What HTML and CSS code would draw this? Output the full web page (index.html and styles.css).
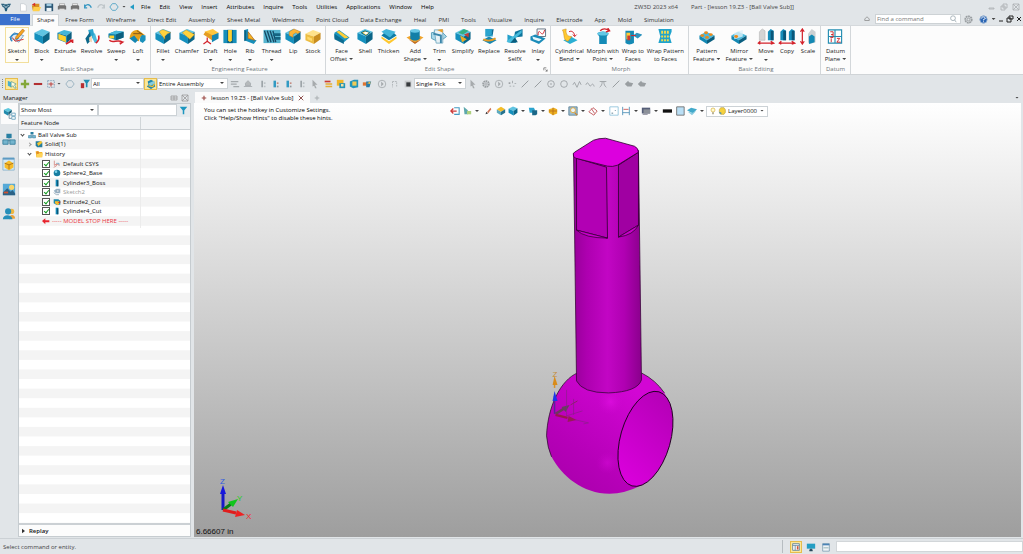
FILE: index.html
```html
<!DOCTYPE html>
<html lang="en">
<head>
<meta charset="utf-8">
<title>ZW3D 2023 x64</title>
<link rel="stylesheet" href="styles.css">
</head>
<body>
<svg class="defs" aria-hidden="true">
<defs>
<g id="cube"><path d="M1 5 9 1l8 3-7 5z" fill="#5fc4e2"/><path d="M1 5l9 4v8l-9-5z" fill="#1590bd"/><path d="M10 9l7-5v8l-7 5z" fill="#0b6688"/></g>
<g id="slab"><path d="M1 8 8 4l9 4-8 5z" fill="#4dbbdd"/><path d="M1 8l8 5v4l-8-5z" fill="#1488b3"/><path d="M9 13l8-5v4l-8 5z" fill="#0a5f80"/></g>
</defs>
<symbol id="i-sketch" viewBox="0 0 18 18"><path d="M1 10l5-5 10 3-5 7z" fill="#dcebf7" stroke="#7ba3c6"/><path d="M4 14c-4-3 0-8 4-8s3 6 0 6" fill="none" stroke="#2d87c6" stroke-width="1.5"/><path d="M15 1l2 2-7 8-3 1 1-3z" fill="#f4a521" stroke="#a85a14" stroke-width=".6"/><path d="M4 10l3 4 9-2" stroke="#d7342c" fill="none"/></symbol>
<symbol id="i-block" viewBox="0 0 18 18"><use href="#cube"/></symbol>
<symbol id="i-extrude" viewBox="0 0 18 18"><path d="M1 5l7-3 8 2-5 4z" fill="#43b5d8"/><path d="M1 5l10 3v8L1 12z" fill="#127fab"/><path d="M2 6l8 3v6l-8-3z" fill="#ffd02e"/><path d="M11 8l5-4v7l-5 5z" fill="#0b5f80"/><path d="M10 17l7-4M14 13h3v3" fill="none" stroke="#d3222b" stroke-width="1.8"/></symbol>
<symbol id="i-revolve" viewBox="0 0 18 18"><path d="M5 2l5-1 2 9-5 1z" fill="#2aa3cd"/><path d="M2 11l5-7 1 9-4 4z" fill="#0b678a"/><path d="M9 10l3-5 3 10-3 1z" fill="#4abadc"/><path d="M6 10l3-2v7l-3-1z" fill="#f3d8ba"/><path d="M16 8c1 4 0 6-3 8" fill="none" stroke="#d3222b" stroke-width="1.7"/></symbol>
<symbol id="i-sweep" viewBox="0 0 18 18"><path d="M1 6l8-3 8 1v6l-8 3-8-3z" fill="#1180aa"/><path d="M1 6l8-3 8 1-8 3z" fill="#49b9dc"/><path d="M2 8h5v3H2z" fill="#ffd02e"/><path d="M9 7l8-3v6l-8 3z" fill="#0b5e7e"/><path d="M2 13c4 4 8-2 14 2m-4-1 4 1-3 2" fill="none" stroke="#d3222b" stroke-width="1.6"/></symbol>
<symbol id="i-loft" viewBox="0 0 18 18"><path d="M0 11C1 3 5 2 9 2l8 6c-2-1-6 0-7 6z" fill="#e5a11c"/><path d="M4 6l9 0M8 3l6 4" stroke="#80551a"/><path d="M0 11l5-3 4 5-3 3z" fill="#1586b2"/><path d="M11 14c0-7 3-7 6-6v5l-3 3z" fill="#1b91bc"/></symbol>
<symbol id="i-fillet" viewBox="0 0 18 18"><use href="#cube"/><path d="M5 4q3-3 5-2l7 3q-4 0-6 4v3z" fill="#ffd23d" stroke="#b98211" stroke-width=".4"/></symbol>
<symbol id="i-chamfer" viewBox="0 0 18 18"><use href="#cube"/><path d="M4 5l4-3 9 5-5 5z" fill="#ffd23d" stroke="#b98211" stroke-width=".4"/></symbol>
<symbol id="i-draft" viewBox="0 0 18 18"><path d="M2 4l9-3 6 4-7 4z" fill="#ffc63d"/><path d="M1 7l2-3 8 4-1 5z" fill="#e49c21"/><path d="M10 8l7-3v6l-7 4z" fill="#1687b2"/><path d="M5 10v5m-4 2 4-3 4 3" fill="none" stroke="#d3222b" stroke-width="1.3"/></symbol>
<symbol id="i-hole" viewBox="0 0 18 18"><path d="M2 2h14v14H2z" fill="#168fba"/><path d="M6 2h6v14H6z" fill="#0b6688"/><path d="M7 2h4v11l-2 2-2-2z" fill="#ffd12f"/></symbol>
<symbol id="i-rib" viewBox="0 0 18 18"><path d="M3 2l4-1v10l9 2-3 4-10-4z" fill="#178fba"/><path d="M3 2l2 1v10l-2 1z" fill="#0b6182"/><path d="M7 4l7 9-7-2z" fill="#f9b522" stroke="#9d5913" stroke-width=".7"/></symbol>
<symbol id="i-thread" viewBox="0 0 18 18"><path d="M0 2h18v14H0z" fill="#55b4cf"/><path d="M1 3l4 12M4 3l4 12M7 3l4 12M10 3l3 12" stroke="#174a65" stroke-width="1.4"/><path d="M10 7h8M12 11h6" stroke="#156482" stroke-width="3"/></symbol>
<symbol id="i-lip" viewBox="0 0 18 18"><use href="#cube"/><path d="M5 4l5-3 7 3-3 2-2-1-3 2v3l-4-2z" fill="#fdb537" stroke="#a86313" stroke-width=".4"/></symbol>
<symbol id="i-stock" viewBox="0 0 18 18"><path d="M1 6l8-4 8 3-7 4z" fill="#ffe28b"/><path d="M1 6l9 3v8l-9-4z" fill="#edbd42"/><path d="M10 9l7-4v7l-7 5z" fill="#c98e20"/><path d="M3 9l5 2v3l-5-2z" fill="#ffd96b"/></symbol>
<symbol id="i-face" viewBox="0 0 18 18"><path d="M1 5l5-3 11 8-6 5-10-5z" fill="#1a95c0"/><path d="M1 6l10 7v4L1 12z" fill="#0d6d92"/><path d="M3 4l3-1 10 7-4 1z" fill="#ffce38"/></symbol>
<symbol id="i-shell" viewBox="0 0 18 18"><use href="#cube"/><path d="M5 5l4-2 5 2-4 3z" fill="#ffce38" stroke="#0b6688"/><path d="M7 5l3 2 3-2-3-1z" fill="#fff"/></symbol>
<symbol id="i-thicken" viewBox="0 0 18 18"><path d="M1 8l8 5 8-5-3-3H4z" fill="#0f7ca5"/><path d="M1 9l8 5 8-5v2l-8 6-8-6z" fill="#ffc82e"/><path d="M1 4l5-3 10 3-6 6z" fill="#42b4d8"/></symbol>
<symbol id="i-add" viewBox="0 0 18 18"><path d="M0 10l9-4 9 4-9 6z" fill="#f0a42b"/><path d="M4 3v8c2 3 8 3 10 0V3z" fill="#127fa8"/><ellipse cx="9" cy="3" rx="5" ry="2" fill="#67c7e5"/><path d="M2 12l7 3 7-3-7 5z" fill="#bd681d"/></symbol>
<symbol id="i-trim" viewBox="0 0 18 18"><path d="M1 5l10-2 6 6-8 6-8-4z" fill="#a8d8e9" stroke="#5a9eba"/><path d="M4 2h9v14H6z" fill="#e8f2f6" stroke="#78adc3"/><path d="M3 6l8 2v8" fill="none" stroke="#3b86aa" stroke-width="2"/><path d="M7 2l6-1v4" fill="#eda128"/></symbol>
<symbol id="i-simplify" viewBox="0 0 18 18"><use href="#cube"/><path d="M4 5l5 2 6-4-5-2z" fill="#35ae83"/><path d="M6 8l7 4-5 3z" fill="#ecac24"/><path d="M10 7l5-2v5z" fill="#c54136"/></symbol>
<symbol id="i-replace" viewBox="0 0 18 18"><path d="M5 1h8v8H5z" fill="#2ba4ce"/><path d="M4 10l9-3 1-6-2 1v5z" fill="#126b92"/><path d="M2 13l7-4 8 4-7 4z" fill="#1787b1"/><path d="M3 12c4 2 8 2 13-1" stroke="#e49a25" fill="none" stroke-width="2"/></symbol>
<symbol id="i-resolve" viewBox="0 0 18 18"><path d="M1 7l8 3 1 6-9-1z" fill="#24a0cb"/><path d="M9 4l8-3v8l-9 1z" fill="#0e759d"/><path d="M0 14L16 2v3L4 16z" fill="#45bbdc"/><path d="M9 10l3 5-8 1z" fill="#0a5c7d"/></symbol>
<symbol id="i-inlay" viewBox="0 0 18 18"><path d="M8 1h9v8H8z" fill="#fff" stroke="#627282"/><path d="M9 8c1-12 4 6 7-6" fill="none" stroke="#d3222b"/><path d="M1 9l5-2 11 4-7 6-9-4z" fill="#1b8cb9"/><path d="M3 9l10 3-3 2-6-2z" fill="#e8f6fa"/></symbol>
<symbol id="i-bend" viewBox="0 0 18 18"><path d="M3 13l8-4 7 4-8 4z" fill="#2aafd3"/><path d="M2 2l4-1c-1 7 3 8 6 8l-4 5C2 13 5 7 2 2z" fill="#ffc830" stroke="#c58512" stroke-width=".5"/><path d="M9 4c3-2 6 1 6 5m-2-2 2 2 2-2" fill="none" stroke="#d3222b"/></symbol>
<symbol id="i-morph" viewBox="0 0 18 18"><path d="M3 6c2-3 10-3 12 0l-2 3v8H5V9z" fill="#158bb7"/><ellipse cx="9" cy="6" rx="6" ry="2" fill="#63c7e5"/><path d="M6 3c3-3 7-2 10 0m-2-3 2 3-4 1" fill="none" stroke="#d3222b" stroke-width="1.4"/></symbol>
<symbol id="i-wrap" viewBox="0 0 18 18"><path d="M1 3h9v13c-3 2-7 2-9 0z" fill="#148ab5"/><path d="M2 5h4v7H2z" fill="#ffc936"/><path d="M3 8h3v5H3z" fill="#cf3c30"/><path d="M9 8l4-3 6 2-5 4z" fill="#2b93be"/><path d="M7 8h5" stroke="#d3222b"/></symbol>
<symbol id="i-wrapp" viewBox="0 0 18 18"><path d="M2 1h14v3l-2 5 2 7H2l2-7z" fill="#20a3cc"/><path d="M5 3h2v3H5zm3 0h2v3H8zm3 0h2v3h-2zM5 8h2v2H5zm3 0h2v2H8zm3 0h2v2h-2zM5 12h2v2H5zm3 0h2v2H8zm3 0h2v2h-2z" fill="#f4db4d"/></symbol>
<symbol id="i-pattern" viewBox="0 0 18 18"><use href="#slab"/><g fill="#ec8b1c"><ellipse cx="8" cy="5" rx="2" ry="1.5"/><ellipse cx="4" cy="8" rx="2" ry="1.5"/><ellipse cx="13" cy="7" rx="2" ry="1.5"/><ellipse cx="9" cy="10" rx="2" ry="1.5"/></g></symbol>
<symbol id="i-mirror" viewBox="0 0 18 18"><use href="#slab"/><path d="M4 5l9-3v7l-9 3z" fill="#dcf0f7" opacity=".8"/><ellipse cx="6" cy="9" rx="2" ry="1.5" fill="#ec8b1c"/></symbol>
<symbol id="i-move" viewBox="0 0 18 18"><path d="M2 4l3-3 3 2v10H2z" fill="#d4d4d4" stroke="#aaa" stroke-width=".5"/><path d="M11 4l3-3 3 2v10h-6z" fill="#168dba"/><path d="M14 3l3 0v10h-3z" fill="#09577a"/><path d="M1 16h15M3 14l-2 2 2 1M14 14l3 2-3 1" stroke="#d3222b" stroke-width="1.5" fill="none"/></symbol>
<symbol id="i-copy" viewBox="0 0 18 18"><path d="M2 4l3-3 3 2v10H2zM11 4l3-3 3 2v10h-6z" fill="#168dba"/><path d="M5 3h3v10H5zM14 3h3v10h-3z" fill="#09577a"/><path d="M1 16h15M3 14l-2 2 2 1M14 14l3 2-3 1" stroke="#d3222b" stroke-width="1.5" fill="none"/></symbol>
<symbol id="i-scale" viewBox="0 0 18 18"><path d="M3 2v14M1 4l2-3 2 3M1 14l2 3 2-3" fill="none" stroke="#d3222b" stroke-width="1.3"/><path d="M9 6l4-5 4 3v11l-6 2-2-2z" fill="#ccd0d2"/><path d="M10 9l3-2 3 2v6l-6 2z" fill="#1489b4"/></symbol>
<symbol id="i-datum" viewBox="0 0 18 18"><path d="M2 2h14v14H2zM9 2v14M2 9h14" fill="#fff" stroke="#238db1" stroke-width="1.2"/><g fill="none" stroke="#cf292c"><path d="M4 4h3v3H5h2v3H4M5 11v4M11 11h3l-3 4h4"/></g></symbol>

<symbol id="s-new" viewBox="0 0 12 12"><path d="M3 2h4l3 2v7H3z" fill="#fff" stroke="#c9ced2"/></symbol>
<symbol id="s-open" viewBox="0 0 12 12"><path d="M1 4h3l1-2h5v8H2z" fill="#d89121"/><path d="M3 6h9l-2 5H2z" fill="#ffd04a"/><path d="M1 3l4-2v4z" fill="#d62e25"/></symbol>
<symbol id="s-save" viewBox="0 0 12 12"><path d="M1 2h10v9H1z" fill="#2b5674"/><path d="M3 2h6v3H3z" fill="#9ec9df"/><path d="M3 7h6v4H3z" fill="#eef5f8"/></symbol>
<symbol id="s-print" viewBox="0 0 12 12"><path d="M3 2h6v3H3z" fill="#eee" stroke="#777" stroke-width=".5"/><path d="M1 5l2-1h7l1 1v4H1z" fill="#717171"/><path d="M3 8h6v2H3z" fill="#ddd"/></symbol>
<symbol id="s-undo" viewBox="0 0 12 12"><path d="M2 6c2-4 6-4 8 1M2 3v4h3" fill="none" stroke="#3596c1" stroke-width="1.5"/></symbol>
<symbol id="s-redo" viewBox="0 0 12 12"><path d="M10 6C8 2 4 2 2 7m8-4v4H7" fill="none" stroke="#bec5c9" stroke-width="1.5"/></symbol>
<symbol id="s-hex" viewBox="0 0 12 12"><path d="M4 2h4l3 4-3 4H4L1 6z" fill="none" stroke="#62abc9" stroke-width="1.2"/></symbol>
<symbol id="s-hexg" viewBox="0 0 12 12"><path d="M4 2h4l3 4-3 4H4L1 6z" fill="none" stroke="#9fb6c3" stroke-width="1.2"/></symbol>
<symbol id="s-left" viewBox="0 0 12 12"><path d="M9 2v8L3 6z" fill="#219bc4"/></symbol>
<symbol id="s-logo" viewBox="0 0 12 12"><path d="M0 2l4 0 2 1 2-1 4 0-2 4-2 1-1 4-2 0-1-4-2-1z" fill="#245b79"/><path d="M2 4l3 1 1 2 1-2 3-1M4 1v2m4-2v2" stroke="#d3e6ed" fill="none" stroke-width=".8"/></symbol>
<symbol id="s-pick" viewBox="0 0 12 12"><path d="M1 2l4 2v6l-4-2z" fill="#4aaecd"/><path d="M5 3l6 3-2 1 2 4-2 0-2-3-2 2z" fill="#fffbe2" stroke="#3a8b88" stroke-width=".7"/></symbol>
<symbol id="s-plus" viewBox="0 0 12 12"><path d="M6 1v10M1 6h10" stroke="#83a83a" stroke-width="2.800"/></symbol>
<symbol id="s-minus" viewBox="0 0 12 12"><path d="M1 6h10" stroke="#b22f31" stroke-width="2.500"/></symbol>
<symbol id="s-boxplus" viewBox="0 0 12 12"><path d="M2 2h8v8H2z" fill="none" stroke="#799db7" stroke-dasharray="2 1"/><path d="M6 4v5M3 6h6" stroke="#bd4642" stroke-width="1.3"/></symbol>
<symbol id="s-filter" viewBox="0 0 12 12"><path d="M1 5h4v6H1z" fill="#b72e31"/><path d="M4 1h8L9 5v5H7V5z" fill="#1e8fb3"/></symbol>
<symbol id="s-assy" viewBox="0 0 12 12"><path d="M2 3l4-2 4 2v2l1 4-5 3-5-3 2-2z" fill="#2186ad"/><path d="M3 5l7-3v4L5 8z" fill="#86ccdd"/><path d="M3 8l5 1 2-3" fill="none" stroke="#f7bf2c" stroke-width="1.5"/></symbol>
<symbol id="s-g1" viewBox="0 0 12 12"><path d="M1 3h9M1 6h7M4 9h7" stroke="#a5aaad" stroke-width="1.5"/></symbol>
<symbol id="s-g2" viewBox="0 0 12 12"><path d="M3 5l3-3 3 3v3H3zM1 9h10" fill="#b5b9bb" stroke="#a5aaad"/></symbol>
<symbol id="s-col" viewBox="0 0 12 12"><path d="M4 2h2v8H4z" fill="#9da4a8"/><path d="M7 4h2v2H7zm0 4h2v2H7z" fill="#bcc2c5"/></symbol>
<symbol id="s-colb" viewBox="0 0 12 12"><path d="M3 2h3v8H3z" fill="#319ac3"/><path d="M7 4h2v2H7z" fill="#c58b80"/><path d="M7 8h2v2H7z" fill="#8d989e"/></symbol>
<symbol id="s-cur" viewBox="0 0 12 12"><path d="M3 1l6 6-3 0 2 4-2 0-1-3-2 1z" fill="#a7abad"/></symbol>
<symbol id="s-list" viewBox="0 0 12 12"><path d="M2 2h7v2H2z" fill="#cc3930"/><path d="M3 5h8v2H3zm0 3h8v2H3z" fill="#e6ae34"/></symbol>
<symbol id="s-multi" viewBox="0 0 12 12"><path d="M1 1h8v7H1z" fill="#f0b628"/><path d="M4 5h7v6H4z" fill="#2295bb"/><path d="M6 6h3v3H6z" fill="#f7e2a1"/></symbol>
<symbol id="s-multi2" viewBox="0 0 12 12"><path d="M1 3l5-2h5v9l-6 1-4-2z" fill="#2295bb"/><path d="M4 3h5v5H4z" fill="#f0cb56"/></symbol>
<symbol id="s-boxes" viewBox="0 0 12 12"><path d="M1 4h5v4H1z" fill="#df7330"/><path d="M5 3h6l-2 7H5z" fill="#287ba9"/><path d="M6 5l4-2v3z" fill="#f4bf40"/></symbol>
<symbol id="s-clock" viewBox="0 0 12 12"><circle cx="6" cy="6" r="4.500" fill="none" stroke="#a5aaad"/><path d="M5 3v6l3-3z" fill="#a5aaad"/></symbol>
<symbol id="s-brk" viewBox="0 0 12 12"><path d="M3 3v7M3 3h5v6" fill="none" stroke="#abb0b3" stroke-dasharray="2 1"/></symbol>
<symbol id="s-sq" viewBox="0 0 12 12"><path d="M2 2h8v8H2z" fill="#c6c9cb"/><path d="M4 4h5v5H4z" fill="#363a3d"/></symbol>
<symbol id="s-gear" viewBox="0 0 12 12"><circle cx="6" cy="6" r="3.500" fill="none" stroke="#999ea1" stroke-width="2" stroke-dasharray="2 .6"/><circle cx="6" cy="6" r="1.500" fill="none" stroke="#999ea1"/></symbol>
<symbol id="s-dots" viewBox="0 0 12 12"><path d="M2 4h2v2H2zm4-2h1v3H6zm3 3h2v1H9zM3 8h2v1H3zm4 0h2v1H7z" fill="#9ea3a6"/></symbol>
<symbol id="s-line" viewBox="0 0 12 12"><path d="M2 10l8-8" stroke="#999ea1" stroke-width="1.2"/></symbol>
<symbol id="s-circ" viewBox="0 0 12 12"><circle cx="6" cy="6" r="4" fill="none" stroke="#999ea1"/></symbol>
<symbol id="s-target" viewBox="0 0 12 12"><circle cx="6" cy="6" r="4" fill="none" stroke="#999ea1"/><circle cx="6" cy="6" r="1" fill="#999ea1"/></symbol>
<symbol id="s-zig" viewBox="0 0 12 12"><path d="M1 7l2-3 3 6 3-7 2 4" fill="none" stroke="#999ea1"/></symbol>
<symbol id="s-wave" viewBox="0 0 12 12"><path d="M1 7c3-7 4 4 6 1s3-2 4 1" fill="none" stroke="#999ea1"/></symbol>
<symbol id="s-pi" viewBox="0 0 12 12"><path d="M2 3h8M5 3c0 4-1 5-3 7M7 3c0 4 1 5 3 7" fill="none" stroke="#999ea1"/></symbol>
<symbol id="s-blob" viewBox="0 0 12 12"><path d="M1 6l4-4 1 2 5 1-2 4H4z" fill="#999ea1"/></symbol>

<symbol id="v-exit" viewBox="0 0 12 12"><path d="M5 2h6v8H5" fill="none" stroke="#449bc3" stroke-width="1.3"/><path d="M1 6h7M4 3L1 6l3 3" fill="none" stroke="#cd3838" stroke-width="1.5"/></symbol>
<symbol id="v-axis" viewBox="0 0 12 12"><path d="M2 1l5 4v5H3z" fill="#5ea8ac"/><path d="M6 6h5v4H6z" fill="#aed07f"/></symbol>
<symbol id="v-pen" viewBox="0 0 12 12"><path d="M3 10l1-3 2 2z" fill="#333"/><path d="M5 7l4-5 1 2-4 5z" fill="#cf7152"/></symbol>
<symbol id="v-face" viewBox="0 0 12 12"><path d="M1 4l5 3v4L1 8z" fill="#5daabf"/><path d="M1 4l5-3 5 3-5 3z" fill="#f4bd28"/><path d="M6 7l5-3v4l-5 3z" fill="#27738e"/></symbol>
<symbol id="v-cube" viewBox="0 0 18 18"><use href="#cube"/></symbol>
<symbol id="v-cubes" viewBox="0 0 12 12"><path d="M1 2h6l1 2v4H2z" fill="#2ca4ce"/><path d="M5 5h6v5l-2 1H5z" fill="#1b6788"/></symbol>
<symbol id="v-or" viewBox="0 0 12 12"><path d="M1 4l6-2 4 2v5l-5 2-5-3z" fill="#edb020"/><path d="M6 2v9M1 6h10" stroke="#b86d18"/></symbol>
<symbol id="v-zoom" viewBox="0 0 12 12"><path d="M1 1h10v10H1z" fill="#9fbed0" stroke="#5d8297"/><circle cx="6" cy="5" r="3" fill="#e9f3f8" stroke="#e5a52d"/><path d="M8 8l3 3" stroke="#d28726" stroke-width="1.5"/></symbol>
<symbol id="v-rot" viewBox="0 0 12 12"><path d="M1 7l5-5 5 4-4 5zM4 3l4 6" fill="none" stroke="#c76569" stroke-width="1.2"/></symbol>
<symbol id="v-pts" viewBox="0 0 12 12"><path d="M1 1h10v10H1z" fill="#fff" stroke="#8ac1da"/><path d="M3 8h2v1H3zm4-3h1v1H7z" fill="#315e76"/></symbol>
<symbol id="v-h" viewBox="0 0 12 12"><path d="M2 1v10M10 1v10M2 8h8" fill="none" stroke="#478bb3"/><path d="M3 4h6" stroke="#c94e4c"/></symbol>
<symbol id="v-mon" viewBox="0 0 12 12"><path d="M1 2h10v7H1z" fill="#555e78"/><path d="M3 4h8v5H3z" fill="#8c9199"/><path d="M2 10h6" stroke="#778"/></symbol>
<symbol id="v-blk" viewBox="0 0 12 12"><path d="M1 4h11v4H1z" fill="#111"/></symbol>
<symbol id="v-bsq" viewBox="0 0 12 12"><path d="M2 1h9v10H2z" fill="#badff5" stroke="#666"/></symbol>
<symbol id="v-lay" viewBox="0 0 12 12"><path d="M0 5l5-3 7 2-5 5z" fill="#42a9ca"/><path d="M1 7l6 1 4-2-5 5z" fill="#8ccce0"/></symbol>
<symbol id="v-bulb" viewBox="0 0 12 12"><circle cx="6" cy="4.500" r="3" fill="#fffbd3" stroke="#d4ae39"/><path d="M5 8h2v3H5z" fill="#948a66"/></symbol>
<symbol id="v-oct" viewBox="0 0 12 12"><path d="M4 1h5l2 3v4l-2 3H4L2 8V4z" fill="#f6d13c" stroke="#b9a24a"/><path d="M2 8l3 2" stroke="#5794a5" stroke-width="2"/></symbol>

<symbol id="m-tree" viewBox="0 0 16 16"><path d="M1 3l5-2 4 2-4 3z" fill="#5ec7dd"/><path d="M1 3l5 3v4L1 7z" fill="#208aac"/><path d="M6 6l4-3v3L6 9z" fill="#15607c"/><path d="M7 8v5h3M7 9h3" fill="none" stroke="#6e8ea1"/><path d="M10 7h4v3h-4zm0 4h4v3h-4z" fill="#fff" stroke="#6ba4bf"/></symbol>
<symbol id="m-assy" viewBox="0 0 16 16"><path d="M5 2h6v5H5z" fill="#287fa2"/><path d="M8 7v3M3 10h9" stroke="#61849a"/><path d="M1 9h6v5H1zm8 0h6v5H9z" fill="#74b5ce" stroke="#387f9d"/></symbol>
<symbol id="m-box" viewBox="0 0 16 16"><path d="M1 1h13v14H1z" fill="#d4e8f4" stroke="#8eb5ce"/><path d="M1 1h13v2H1z" fill="#5d9bc3"/><path d="M3 7l5-3 5 3v5l-5 3-5-3z" fill="#f6bb29"/><path d="M3 7l5 2 5-2M8 9v5" fill="none" stroke="#a96f16"/></symbol>
<symbol id="m-pic" viewBox="0 0 16 16"><path d="M1 2h14v13H1z" fill="#55a9d7"/><path d="M1 12l5-5 4 4 2-2 3 4v2H1z" fill="#2b6286"/><circle cx="11" cy="6" r="3" fill="#f9d66b"/><path d="M2 12h5" stroke="#d15330" stroke-width="2"/></symbol>
<symbol id="m-user" viewBox="0 0 16 16"><path d="M8 14c0-7 7-6 7-1z" fill="#e8a23c"/><circle cx="11" cy="5" r="3" fill="#eeb640"/><circle cx="7" cy="5" r="3.500" fill="#258fba"/><path d="M1 14c0-6 10-6 11 0z" fill="#258fba"/></symbol>
<symbol id="t-solid" viewBox="0 0 12 12"><path d="M1 2h8l2 2v7H3L1 8z" fill="#267e9e"/><path d="M3 5l6-4 2 3-6 5z" fill="#f5c42e"/></symbol>
<symbol id="t-fold" viewBox="0 0 12 12"><path d="M1 2h4l1 1h5v8H2z" fill="#f2b72d"/><path d="M3 5h9l-2 6H2z" fill="#ffd459"/><circle cx="4" cy="4" r="2" fill="#e28b25"/></symbol>
<symbol id="t-csys" viewBox="0 0 12 12"><path d="M2 1v7l3-2 5 2M5 6v3l-4 2" fill="none" stroke="#cf6e67"/><path d="M5 5h4v3" fill="none" stroke="#5594ba"/></symbol>
<symbol id="t-sph" viewBox="0 0 12 12"><circle cx="6" cy="6" r="5" fill="#177da1"/><circle cx="4.500" cy="4" r="2" fill="#7bd0e8"/></symbol>
<symbol id="t-cyl" viewBox="0 0 12 12"><path d="M4 1h4v10H4z" fill="#1286b4"/><path d="M6 2h2v9H6z" fill="#0a5879"/></symbol>
<symbol id="t-sk" viewBox="0 0 12 12"><path d="M1 4l4-3h6v7H4z" fill="#9fb7ca"/><path d="M5 3h4v3H5zM1 7l4 3h4" fill="#eef3f6" stroke="#8096a6"/></symbol>
<symbol id="t-ext" viewBox="0 0 12 12"><path d="M1 2h7l3 2v6H5L1 8z" fill="#1d88aa"/><path d="M3 5h6v4L7 11 3 8z" fill="#f8bd2b"/><path d="M7 7l4-2v3z" fill="#cf3028"/></symbol>
</svg>

<header class="top">
  <div class="title">
    <div class="quick">
      <svg class="logo"><use href="#s-logo"/></svg>
      <button aria-label="New"><svg><use href="#s-new"/></svg></button><button aria-label="Open"><svg><use href="#s-open"/></svg></button><button aria-label="Save"><svg><use href="#s-save"/></svg></button><button aria-label="Print"><svg><use href="#s-print"/></svg></button><button aria-label="Print preview"><svg><use href="#s-print"/></svg></button><button aria-label="Undo"><svg><use href="#s-undo"/></svg></button><button aria-label="Redo"><svg><use href="#s-redo"/></svg></button><button aria-label="Regenerate"><svg><use href="#s-hex"/></svg></button><button class="narrow" aria-label="More"><i class="caret"></i></button><button class="narrow" aria-label="Collapse"><svg><use href="#s-left"/></svg></button>
    </div>
    <nav class="menu"><a href="#">File</a><a href="#">Edit</a><a href="#">View</a><a href="#">Insert</a><a href="#">Attributes</a><a href="#">Inquire</a><a href="#">Tools</a><a href="#">Utilities</a><a href="#">Applications</a><a href="#">Window</a><a href="#">Help</a></nav>
    <div class="name"><span>ZW3D 2023 x64</span><span>Part - [lesson 19.Z3 - [Ball Valve Sub]]</span></div>
    <div class="win pale"><button aria-label="Minimize"><svg viewBox="0 0 8 8"><path d="M1 5h5v1H1z"/></svg></button><button aria-label="Restore"><svg viewBox="0 0 8 8"><path d="M3 1h4v4H3zM1 3h4v4H1z"/></svg></button><button aria-label="Close"><svg viewBox="0 0 8 8"><path d="M1 1h6v6H1zM1 1l6 6M7 1L1 7"/></svg></button></div>
  </div>
  <div class="tabrow">
    <a class="file" href="#">File</a>
    <nav class="tabs"><a class="on" href="#">Shape</a><a href="#">Free Form</a><a href="#">Wireframe</a><a href="#">Direct Edit</a><a href="#">Assembly</a><a href="#">Sheet Metal</a><a href="#">Weldments</a><a href="#">Point Cloud</a><a href="#">Data Exchange</a><a href="#">Heal</a><a href="#">PMI</a><a href="#">Tools</a><a href="#">Visualize</a><a href="#">Inquire</a><a href="#">Electrode</a><a href="#">App</a><a href="#">Mold</a><a href="#">Simulation</a></nav>
    <button class="fold" aria-label="Fold ribbon"><svg viewBox="0 0 8 8"><path d="M1 4l3-3 3 3v2H1z" fill="none" stroke="#888"/></svg></button>
    <label class="find"><input type="text" placeholder="Find a command" aria-label="Find a command"><svg viewBox="0 0 10 10"><circle cx="5" cy="4" r="3" fill="none" stroke="#9aa8b0"/><path d="M7 6l2 3" stroke="#9aa8b0"/></svg></label>
    <div class="win"><button class="big" aria-label="Settings"><svg viewBox="0 0 12 12"><use href="#s-gear"/></svg></button><button class="big" aria-label="Help"><svg viewBox="0 0 12 12"><circle cx="6" cy="6" r="4" fill="#2c66b4" stroke="#8cabd0"/><path d="M4 5c0-3 4-2 4 0L6 6v1m0 1v1" stroke="#fff" fill="none"/></svg></button><button class="tiny" aria-label="Help menu"><i class="caret"></i></button><button aria-label="Minimize document"><svg viewBox="0 0 8 8"><path d="M2 6h4"/></svg></button><button aria-label="Restore document"><svg viewBox="0 0 8 8"><path d="M3 1h4v3H3zM1 3h4v4H1z"/></svg></button><button aria-label="Close document"><svg viewBox="0 0 8 8"><path d="M2 2l4 4M6 2L2 6"/></svg></button></div>
  </div>
  <div class="ribbon">
    <section class="grp g1"><div class="btns">
      <button class="hot"><svg><use href="#i-sketch"/></svg><span>Sketch</span><i class="caret"></i></button><button><svg><use href="#i-block"/></svg><span>Block</span><i class="caret"></i></button><button><svg><use href="#i-extrude"/></svg><span>Extrude</span></button><button><svg><use href="#i-revolve"/></svg><span>Revolve</span></button><button><svg><use href="#i-sweep"/></svg><span>Sweep</span><i class="caret"></i></button><button><svg><use href="#i-loft"/></svg><span>Loft</span><i class="caret"></i></button></div><h2>Basic Shape</h2></section>
    <section class="grp g2"><div class="btns">
      <button><svg><use href="#i-fillet"/></svg><span>Fillet</span><i class="caret"></i></button><button><svg><use href="#i-chamfer"/></svg><span>Chamfer</span></button><button><svg><use href="#i-draft"/></svg><span>Draft</span><i class="caret"></i></button><button><svg><use href="#i-hole"/></svg><span>Hole</span><i class="caret"></i></button><button><svg><use href="#i-rib"/></svg><span>Rib</span><i class="caret"></i></button><button><svg><use href="#i-thread"/></svg><span>Thread</span><i class="caret"></i></button><button><svg><use href="#i-lip"/></svg><span>Lip</span></button><button><svg><use href="#i-stock"/></svg><span>Stock</span></button></div><h2>Engineering Feature</h2></section>
    <section class="grp g3"><div class="btns">
      <button><svg><use href="#i-face"/></svg><span>Face</span><span>Offset <i class="caret"></i></span></button><button><svg><use href="#i-shell"/></svg><span>Shell</span></button><button><svg><use href="#i-thicken"/></svg><span>Thicken</span></button><button><svg><use href="#i-add"/></svg><span>Add</span><span>Shape <i class="caret"></i></span></button><button><svg><use href="#i-trim"/></svg><span>Trim</span><i class="caret"></i></button><button><svg><use href="#i-simplify"/></svg><span>Simplify</span></button><button><svg><use href="#i-replace"/></svg><span>Replace</span></button><button><svg><use href="#i-resolve"/></svg><span>Resolve</span><span>SelfX</span></button><button><svg><use href="#i-inlay"/></svg><span>Inlay</span><i class="caret"></i></button></div><h2>Edit Shape</h2><svg class="launch" viewBox="0 0 6 6"><path d="M1 4V1h3M3 3l2 2M5 3v2H3" fill="none" stroke="#777"/></svg></section>
    <section class="grp g4"><div class="btns">
      <button><svg><use href="#i-bend"/></svg><span>Cylindrical</span><span>Bend <i class="caret"></i></span></button><button><svg><use href="#i-morph"/></svg><span>Morph with</span><span>Point <i class="caret"></i></span></button><button><svg><use href="#i-wrap"/></svg><span>Wrap to</span><span>Faces</span></button><button><svg><use href="#i-wrapp"/></svg><span>Wrap Pattern</span><span>to Faces</span></button></div><h2>Morph</h2></section>
    <section class="grp g5"><div class="btns">
      <button><svg><use href="#i-pattern"/></svg><span>Pattern</span><span>Feature <i class="caret"></i></span></button><button><svg><use href="#i-mirror"/></svg><span>Mirror</span><span>Feature <i class="caret"></i></span></button><button><svg><use href="#i-move"/></svg><span>Move</span><i class="caret"></i></button><button><svg><use href="#i-copy"/></svg><span>Copy</span></button><button><svg><use href="#i-scale"/></svg><span>Scale</span></button></div><h2>Basic Editing</h2></section>
    <section class="grp g6"><div class="btns">
      <button><svg><use href="#i-datum"/></svg><span>Datum</span><span>Plane <i class="caret"></i></span></button></div><h2>Datum</h2></section>
  </div>
</header>

<div class="tools">
  <i class="grip"></i>
  <button class="sel-on" aria-label="Pick"><svg><use href="#s-pick"/></svg></button><button aria-label="Add"><svg><use href="#s-plus"/></svg></button><button aria-label="Remove"><svg><use href="#s-minus"/></svg></button><button aria-label="Window pick"><svg><use href="#s-boxplus"/></svg></button><i class="caret"></i><button class="gap" aria-label="Polygon pick"><svg><use href="#s-hexg"/></svg></button><button class="gap" aria-label="Filter"><svg><use href="#s-filter"/></svg></button>
  <div class="sel w-all"><select aria-label="Filter list"><option>All</option></select></div>
  <button class="sel-on" aria-label="Assembly scope"><svg><use href="#s-assy"/></svg></button>
  <div class="sel w-entire"><select aria-label="Scope"><option>Entire Assembly</option></select></div>
  <button aria-label="Align"><svg><use href="#s-g1"/></svg></button><button aria-label="Group"><svg><use href="#s-g2"/></svg></button>
  <button class="step" aria-label="Column 1"><svg><use href="#s-col"/></svg></button><button aria-label="Column 2"><svg><use href="#s-colb"/></svg></button><button aria-label="Column 3"><svg><use href="#s-colb"/></svg></button><button aria-label="Column 4"><svg><use href="#s-col"/></svg></button><button aria-label="Cursor"><svg><use href="#s-cur"/></svg></button><button aria-label="List"><svg><use href="#s-list"/></svg></button><button aria-label="Layers"><svg><use href="#s-multi"/></svg></button><button aria-label="Solids"><svg><use href="#s-multi2"/></svg></button><button aria-label="Boxes"><svg><use href="#s-boxes"/></svg></button>
  <button class="step" aria-label="Play"><svg><use href="#s-clock"/></svg></button><button aria-label="Bracket"><svg><use href="#s-brk"/></svg></button><button aria-label="Stop"><svg><use href="#s-sq"/></svg></button>
  <div class="sel w-pick"><select aria-label="Pick mode"><option>Single Pick</option></select></div>
  <button aria-label="Pointer"><svg><use href="#s-cur"/></svg></button><button aria-label="Gear"><svg><use href="#s-gear"/></svg></button><button aria-label="Run"><svg><use href="#s-clock"/></svg></button><button aria-label="Points"><svg><use href="#s-dots"/></svg></button><button aria-label="Line"><svg><use href="#s-line"/></svg></button><button aria-label="Segment"><svg><use href="#s-line"/></svg></button><button aria-label="Centre"><svg><use href="#s-target"/></svg></button><button aria-label="Circle"><svg><use href="#s-circ"/></svg></button><button aria-label="Polyline"><svg><use href="#s-zig"/></svg></button><button aria-label="Spline"><svg><use href="#s-wave"/></svg></button><button aria-label="Tangent"><svg><use href="#s-pi"/></svg></button><button aria-label="Edge"><svg><use href="#s-line"/></svg></button><button aria-label="Face"><svg><use href="#s-blob"/></svg></button><button aria-label="Shape"><svg><use href="#s-blob"/></svg></button>
</div>

<main class="work">
  <aside class="manager">
    <div class="mhead"><h1>Manager</h1><svg viewBox="0 0 20 8"><path d="M1 2h6v4H1zM1 4h6M4 2v4M12 1h6v6h-6zM12 1l6 6M18 1l-6 6" fill="none" stroke="#999" stroke-width=".8"/></svg></div>
    <div class="mbody">
      <nav class="side"><button class="on" aria-label="History manager"><svg><use href="#m-tree"/></svg></button><button aria-label="Assembly manager"><svg><use href="#m-assy"/></svg></button><button aria-label="View manager"><svg><use href="#m-box"/></svg></button><button aria-label="Visual manager"><svg><use href="#m-pic"/></svg></button><button aria-label="Role manager"><svg><use href="#m-user"/></svg></button></nav>
      <div class="panel">
        <div class="filter"><div class="sel"><select aria-label="Show"><option>Show Most</option></select></div><input type="text" aria-label="Filter text"><button aria-label="Apply filter"><svg viewBox="0 0 12 12"><path d="M1 1h10L7 6v5H5V6z" fill="#1c96c0"/></svg></button></div>
        <div class="thead"><span>Feature Node</span><span></span></div>
        <ul class="tree">
          <li><i class="chev open"></i><svg><use href="#m-assy"/></svg>Ball Valve Sub</li>
          <li class="l1"><i class="chev"></i><svg><use href="#t-solid"/></svg>Solid(1)</li>
          <li class="l1"><i class="chev open"></i><svg><use href="#t-fold"/></svg>History</li>
          <li class="l2"><label><input type="checkbox" checked><svg><use href="#t-csys"/></svg>Default CSYS</label></li>
          <li class="l2"><label><input type="checkbox" checked><svg><use href="#t-sph"/></svg>Sphere2_Base</label></li>
          <li class="l2"><label><input type="checkbox" checked><svg><use href="#t-cyl"/></svg>Cylinder3_Boss</label></li>
          <li class="l2 dim"><label><input type="checkbox" checked><svg><use href="#t-sk"/></svg>Sketch2</label></li>
          <li class="l2"><label><input type="checkbox" checked><svg><use href="#t-ext"/></svg>Extrude2_Cut</label></li>
          <li class="l2"><label><input type="checkbox" checked><svg><use href="#t-cyl"/></svg>Cylinder4_Cut</label></li>
          <li class="l2 stop"><svg viewBox="0 0 12 12"><path d="M0 6l5-4v3h6v3H5v3z" fill="#e8232d"/></svg>----- MODEL STOP HERE -----</li>
        </ul>
        <button class="replay"><svg viewBox="0 0 6 8"><path d="M1 1l4 3-4 3z" fill="#333"/></svg>Replay</button>
      </div>
    </div>
  </aside>
  <section class="doc">
    <div class="doctabs"><a class="on" href="#"><svg viewBox="0 0 8 8"><path d="M4 1v6M1 4h6" stroke="#9c4a45" stroke-width="1.5"/></svg>lesson 19.Z3 - [Ball Valve Sub]<svg class="x" viewBox="0 0 8 8"><path d="M1 1l6 6M7 1L1 7" stroke="#85413d" stroke-width="1.2"/></svg></a><button aria-label="New tab"><svg viewBox="0 0 8 8"><path d="M4 1v6M1 4h6" stroke="#a8adb0" stroke-width="1.3"/></svg></button><button class="more" aria-label="Tab list"><i class="caret"></i></button></div>
    <div class="view">
      <svg class="model" viewBox="193 103 828 434" role="img" aria-label="Ball valve model">
        <defs>
          <linearGradient id="stem"><stop offset="0" stop-color="#98009a"/><stop offset=".2" stop-color="#ae00b0"/><stop offset=".5" stop-color="#c206c4"/><stop offset=".75" stop-color="#b000b2"/><stop offset="1" stop-color="#8a008c"/></linearGradient>
          <linearGradient id="ball" x1="0" y1=".9" x2=".65" y2=".1"><stop offset="0" stop-color="#a800aa"/><stop offset=".35" stop-color="#b600b8"/><stop offset="1" stop-color="#d206d4"/></linearGradient>
          <radialGradient id="shine"><stop offset="0" stop-color="#e010e2"/><stop offset="1" stop-color="#d008d2" stop-opacity="0"/></radialGradient>
          <linearGradient id="bore" x1=".7" y1="0" x2=".4" y2="1"><stop offset="0" stop-color="#b400b6"/><stop offset="1" stop-color="#da00dc"/></linearGradient>
        </defs>
        <path d="M577 373C560 380 547 407 546 436Q547 448 551 457C561 476 582 494 609 494Q624 494 640 486C656 480 669 455 672 428Q674 410 664 393Q655 380 641 373z" fill="url(#ball)"/>
        <path d="M577 373C560 380 547 407 546 436Q547 448 551 457M641 373Q655 380 664 393" fill="none" stroke="#301031" stroke-width=".8"/>
        <circle cx="610" cy="402" r="13" fill="url(#shine)" opacity=".7"/><circle cx="607" cy="463" r="11" fill="url(#shine)" opacity=".4"/>
        <ellipse cx="645" cy="439" rx="25" ry="49" transform="rotate(16 645 439)" fill="url(#bore)" stroke="#220022" stroke-width=".9"/>
        <path d="M573 153L576 381Q582 393 608 393Q637 392 641 380L638 150z" fill="url(#stem)"/>
        <path d="M573 153L576 381Q582 393 608 393Q637 392 641 380L638 150" fill="none" stroke="#3a063b" stroke-width=".8"/>
        <path d="M576 158L606 167 607 238 576 230z" fill="#b200b4" stroke="#2b002b" stroke-width=".8"/>
        <path d="M618 165L638 152V225L618 237z" fill="#a000a2" stroke="#2b002b" stroke-width=".8"/>
        <path d="M576 230Q584 238 607 238zM618 237Q633 235 638 225z" fill="#c800ca" stroke="#2b002b" stroke-width=".7"/>
        <path d="M573 156Q572 153 574 152L593 140Q598 138 605 138L634 146Q638 148 638 152L617 165Q612 167 607 166L575 158z" fill="#dc00de" stroke="#2b002b" stroke-width=".8"/>
        <g fill="none"><path d="M554 414V396" stroke="#5b229c" stroke-width="1.5"/><path d="M554 391l3 10h-5z" fill="#1c35e8"/><path d="M554 388V382" stroke="#d99024" stroke-width="1.500"/><path d="M554 376l3 9h-5z" fill="#d98b18"/><path d="M555 414l8-5" stroke="#6f375d" stroke-width="2.500"/><path d="M569 405l-4 7-4-5z" fill="#66405e"/><path d="M570 405l7-4" stroke="#8f2368"/><path d="M555 415l12 3" stroke="#9c164f" stroke-width="2.500"/><path d="M576 420l-9 2 1-6z" fill="#971b58"/><path d="M575 420l13 3-5 1M566 390v26l16-5M573 399v16" stroke="#842283" stroke-width=".6"/></g>
        <text x="552" y="377" class="zlab">Z</text>
      </svg>
      <div class="over">
        <p>You can set the hotkey in Customize Settings.<br>Click "Help/Show Hints" to disable these hints.</p>
        <div class="vt">
          <button aria-label="Exit"><svg><use href="#v-exit"/></svg></button><button class="dd" aria-label="Axes"><svg><use href="#v-axis"/></svg><i class="caret"></i></button><button aria-label="Draw"><svg><use href="#v-pen"/></svg></button><button aria-label="Face"><svg><use href="#v-face"/></svg></button><button class="dd" aria-label="Shade"><svg><use href="#v-cube"/></svg><i class="caret"></i></button><button class="dd" aria-label="Views"><svg><use href="#v-cubes"/></svg><i class="caret"></i></button><button class="dd" aria-label="Section"><svg><use href="#v-or"/></svg><i class="caret"></i></button><button class="dd" aria-label="Zoom"><svg><use href="#v-zoom"/></svg><i class="caret"></i></button><button class="dd" aria-label="Rotate"><svg><use href="#v-rot"/></svg><i class="caret"></i></button><button aria-label="Fit"><svg><use href="#v-pts"/></svg></button><button class="dd" aria-label="Dimension"><svg><use href="#v-h"/></svg><i class="caret"></i></button><button class="dd" aria-label="Display"><svg><use href="#v-mon"/></svg><i class="caret"></i></button><button aria-label="Line colour"><svg><use href="#v-blk"/></svg></button><button aria-label="Fill colour"><svg><use href="#v-bsq"/></svg></button><button class="dd" aria-label="Layers"><svg><use href="#v-lay"/></svg><i class="caret"></i></button>
          <div class="sel layer"><svg><use href="#v-bulb"/></svg><svg><use href="#v-oct"/></svg><select aria-label="Layer"><option>Layer0000</option></select></div>
        </div>
      </div>
      <div class="foot">
        <svg class="triad" viewBox="0 0 40 44"><path d="M8 34V15" stroke="#1717c9" stroke-width="3"/><path d="M8 9l3 9H5z" fill="#1717dd"/><path d="M8 34l8-6" stroke="#097c12" stroke-width="3"/><path d="M23 23l-5 8-5-5z" fill="#12c51c"/><path d="M8 34l13 3" stroke="#e01d1d" stroke-width="3"/><path d="M30 39l-10 2 2-7z" fill="#ee2222"/><text x="5" y="8" fill="#2f5be0">Z</text><text x="22" y="25" fill="#22d022">Y</text><text x="31" y="43" fill="#ee2a2a">X</text></svg>
        <span>6.66607 in</span>
      </div>
    </div>
  </section>
</main>

<footer class="status"><span>Select command or entity.</span>
  <div class="sbtn"><button class="sel-on" aria-label="Manager"><svg viewBox="0 0 12 12"><path d="M2 2h8v8H2z" fill="#fff" stroke="#5e7f94"/><path d="M2 4h8M5 4v6" stroke="#5e7f94"/><path d="M7 5h2v4H7z" fill="#d0553c"/></svg></button><button aria-label="Output"><svg viewBox="0 0 12 12"><path d="M1 2h10v6H1z" fill="#249ec3"/><path d="M4 10h4M6 8v2" stroke="#28495a" stroke-width="2"/></svg></button><button aria-label="Log"><svg viewBox="0 0 12 12"><path d="M2 2h8v9H2z" fill="#eef3f6" stroke="#7fa0b3"/><path d="M2 2h8v2H2z" fill="#4b83b5"/><path d="M3 7h6" stroke="#8aa"/></svg></button></div>
  <input type="text" aria-label="Message">
</footer>
</body>
</html>
```

FILE: styles.css
```css
* { box-sizing: border-box; }
html, body { height: 100%; }
body {
  margin: 0; display: flex; flex-direction: column; overflow: hidden;
  background: #e1e5e8; color: #111;
  font: 6px/8px "Open Sans", "Noto Sans", sans-serif;
}
.defs { position: absolute; width: 0; height: 0; }
a { color: inherit; text-decoration: none; }
button { border: 0; padding: 0; margin: 0; background: none; font: inherit; color: inherit; display: flex; align-items: center; justify-content: center; }
input, select { font: inherit; color: inherit; border: 0; margin: 0; padding: 0; min-width: 0; outline: 0; border-radius: 0; }
h1, h2, p, ul { margin: 0; padding: 0; font: inherit; list-style: none; }
svg { display: block; flex: none; overflow: visible; }
.caret, .sel::after { flex: none; width: 4px; height: 2px; background: #444; clip-path: polygon(0 0, 100% 0, 50% 100%); }

/* title bar */
.title { display: flex; align-items: center; height: 13px; }
.quick { display: flex; align-items: center; padding-left: 1px; flex: none; width: 137px; }
.quick svg { width: 10px; height: 10px; }
.quick .logo { margin-right: 5px; }
.quick button { width: 13px; }
.quick .narrow { width: 8px; }
.quick .narrow svg { width: 8px; height: 8px; }
.menu { display: flex; color: #000; }
.menu a { padding: 0 5px 0 4px; white-space: nowrap; }
.name { flex: 1; display: flex; justify-content: flex-end; gap: 13px; padding-right: 192px; color: #444; white-space: nowrap; }
.win { display: flex; align-items: center; flex: none; }
.win button { width: 9px; height: 10px; }
.win svg { width: 8px; height: 8px; fill: none; stroke: #222; }
.pale { padding-right: 1px; }
.pale button { width: 12px; }
.pale svg { stroke: #a9adb0; stroke-width: .8; }
.win .big { width: 15px; }
.win .big svg { width: 11px; height: 11px; stroke: none; }
.win .tiny { width: 5px; }

/* ribbon tabs */
.tabrow { display: flex; align-items: stretch; height: 12px; color: #333; line-height: 12px; }
.file { width: 30px; margin-top: 1px; background: #3a70cd; color: #fff; text-align: center; line-height: 11px; }
.tabs { display: flex; margin-left: 2px; flex: 1; }
.tabs a { padding: 0 6px; margin-top: 1px; line-height: 12px; white-space: nowrap; }
.tabs .on { background: #fcfcfc; border: 1px solid #d0d5d8; border-bottom: 0; padding: 0 4px; height: 12px; line-height: 11px; }
.fold { width: 16px; }
.fold svg { width: 6px; height: 6px; }
.find { display: flex; align-items: center; width: 86px; height: 10px; margin-top: 1px; background: #fff; border: 1px solid #cdd2d5; }
.find input { flex: 1; height: 8px; padding-left: 1px; background: none; }
.find input::placeholder { color: #777; opacity: 1; }
.find svg { width: 8px; height: 8px; margin-right: 3px; }

/* ribbon */
.ribbon { display: flex; height: 50px; background: #fcfcfc; border-top: 1px solid #d5d9dc; border-bottom: 1px solid #d0d4d7; }
.grp { position: relative; display: flex; flex-direction: column; flex: none; padding: 2px 1px 0 4px; border-right: 1px solid #d3d7da; }
.g1 { width: 151px; padding-left: 5px; }
.g2 { width: 175px; }
.g3 { width: 225px; }
.g4 { width: 138px; }
.g5 { width: 132px; }
.g6 { width: 30px; padding: 2px 0 0; }
.btns { flex: 1; display: flex; justify-content: space-between; padding-right: 3px; }
.g6 .btns { justify-content: center; padding: 0; }
.btns button { flex-direction: column; justify-content: flex-start; min-width: 16px; height: 36px; white-space: nowrap; color: #222; }
.btns svg { width: 18px; height: 17px; margin: 0 -1px 2px; }
.btns span { display: flex; align-items: center; gap: 2px; line-height: 8px; }
.btns button > .caret { margin-top: 4px; }
.btns .hot { width: 24px; border: 1px solid #f2df9c; margin-top: -1px; background: #fffdf5; }
.grp h2 { text-align: center; color: #6d747a; line-height: 8px; height: 9px; }
.launch { position: absolute; right: 2px; bottom: 2px; width: 5px; height: 5px; }

/* selection toolbar */
.tools { display: flex; align-items: center; height: 17px; flex: none; }
.tools button { width: 13px; height: 12px; }
.tools svg { width: 10px; height: 10px; }
.grip { width: 1px; height: 9px; margin: 0 2px; border-left: 1px dotted #888; }
.sel-on { background: #fce798; border: 1px solid #e6bd4d; }
.tools .gap { margin-left: 2px; }
.tools .step { margin-left: 2px; }
.sel { position: relative; display: flex; align-items: center; height: 11px; background: #fff; border: 1px solid #ccd2d6; }
.sel select { appearance: none; flex: 1; width: 100%; height: 9px; padding-left: 1px; background: none; }
.sel::after { content: ""; position: absolute; right: 3px; top: 3px; }
.w-all { width: 53px; }
.w-entire { width: 71px; }
.w-pick { width: 52px; }

/* work area */
.work { flex: 1; display: flex; min-height: 0; }
.manager { width: 190px; flex: none; display: flex; flex-direction: column; }
.mhead { display: flex; justify-content: space-between; align-items: center; height: 11px; padding: 0 0 0 3px; }
.mhead svg { width: 20px; height: 8px; }
.mbody { flex: 1; display: flex; min-height: 0; }
.side { width: 18px; display: flex; flex-direction: column; gap: 4px; }
.side button { width: 16px; height: 21px; margin-left: 1px; }
.side .on { background: #fbfbfb; width: 17px; }
.side svg { width: 14px; height: 14px; }
.panel { flex: 1; display: flex; flex-direction: column; border: 1px solid #c6ccd0; background: #fff; margin-bottom: 1px; }
.filter { display: flex; height: 13px; background: #e6eaed; padding-bottom: 1px; flex: none; }
.filter .sel { width: 79px; height: 12px; }
.filter .sel::after { top: 4px; }
.filter input { flex: 1; background: #fff; border: 1px solid #ccd2d6; }
.filter button { width: 13px; }
.filter button svg { width: 9px; height: 9px; }
.thead { display: flex; flex: none; height: 13px; line-height: 12px; background: #f1f3f5; border-bottom: 1px solid #c9ced2; }
.thead span { flex: 1; padding-left: 1px; border-left: 1px solid #d0d5d8; }
.thead span:first-child { flex: 0 0 121px; border: 0; padding-left: 2px; }
.tree {
  flex: 1; min-height: 0; display: grid; grid-template-rows: repeat(41, minmax(0, 1fr));
  background: linear-gradient(#fff 50%, #f4f4f4 50%) 0 0 / 100% calc(200% / 41);
  position: relative;
}
.tree::after { content: ""; position: absolute; left: 121px; top: 0; bottom: 75%; border-left: 1px solid #ececec; }
.tree li { display: flex; align-items: center; white-space: nowrap; padding-left: 1px; }
.tree .l1 { padding-left: 8px; }
.tree .l2 { padding-left: 23px; }
.tree svg { width: 8px; height: 8px; margin-right: 2px; }
.tree label { display: flex; align-items: center; }
.tree input { appearance: none; position: relative; width: 8px; height: 8px; margin-right: 3px; background: #fff; border: 1px solid #555; }
.tree input:checked::after { content: ""; position: absolute; left: 2px; top: 0; width: 2px; height: 4px; border: solid #149c22; border-width: 0 1px 1px 0; transform: rotate(40deg); }
.chev { width: 3px; height: 3px; margin: 0 4px 0 1px; border: solid #999; border-width: 1px 1px 0 0; transform: rotate(45deg); }
.chev.open { border-color: #444; transform: rotate(135deg); }
.tree .dim { color: #999; }
.tree .stop { color: #ea3440; }
.replay { flex: none; height: 13px; justify-content: flex-start; padding-left: 2px; gap: 3px; font-weight: 600; border-top: 2px solid #cbd0d4; background: #fcfcfc; }
.replay svg { width: 5px; height: 6px; }

.doc { flex: 1; min-width: 0; display: flex; flex-direction: column; padding: 0 2px 1px 4px; }
.doctabs { display: flex; align-items: center; height: 11px; flex: none; }
.doctabs .on { display: flex; align-items: center; height: 11px; gap: 4px; background: #fbfbfb; padding: 0 6px; margin-left: 1px; white-space: nowrap; }
.doctabs svg { width: 6px; height: 6px; }
.doctabs button { width: 14px; }
.doctabs .more { margin-left: auto; width: 8px; }
.view { flex: 1; position: relative; display: flex; flex-direction: column; justify-content: space-between; background: linear-gradient(#fff, #9e9e9e); overflow: hidden; }
.model { position: absolute; inset: 0; width: 100%; height: 100%; }
.zlab { font: 8px "Liberation Sans", sans-serif; fill: #c48d3c; }
.over { position: relative; display: flex; align-items: flex-start; padding: 2px 0 0 10px; }
.over p { width: 244px; padding-top: 1px; color: #000; }
.vt { display: flex; align-items: center; height: 12px; }
.vt button { width: 13px; }
.vt .dd { width: 20px; justify-content: flex-start; padding-left: 1px; gap: 3px; }
.vt svg { width: 10px; height: 10px; }
.layer { width: 62px; padding-left: 2px; }
.vt .layer svg { width: 8px; height: 8px; margin-right: 1px; }
.foot { position: relative; display: flex; flex-direction: column; align-items: flex-start; gap: 6px; padding-left: 2px; font: 8px/11px "Liberation Sans", sans-serif; color: #111; }
.triad { width: 40px; height: 44px; margin-left: 19px; }

/* status bar */
.status { display: flex; align-items: center; height: 16px; flex: none; padding-left: 3px; border-top: 1px solid #ccd1d5; color: #444; }
.status > span { flex: 1; }
.sbtn { display: flex; align-items: center; height: 13px; gap: 3px; padding: 0 4px 0 7px; border-left: 1px solid #b7bdc1; }
.sbtn button { width: 12px; height: 12px; }
.sbtn svg { width: 10px; height: 10px; }
.status input { width: 187px; height: 11px; background: #fff; border: 1px solid #d2d6d9; }
```
